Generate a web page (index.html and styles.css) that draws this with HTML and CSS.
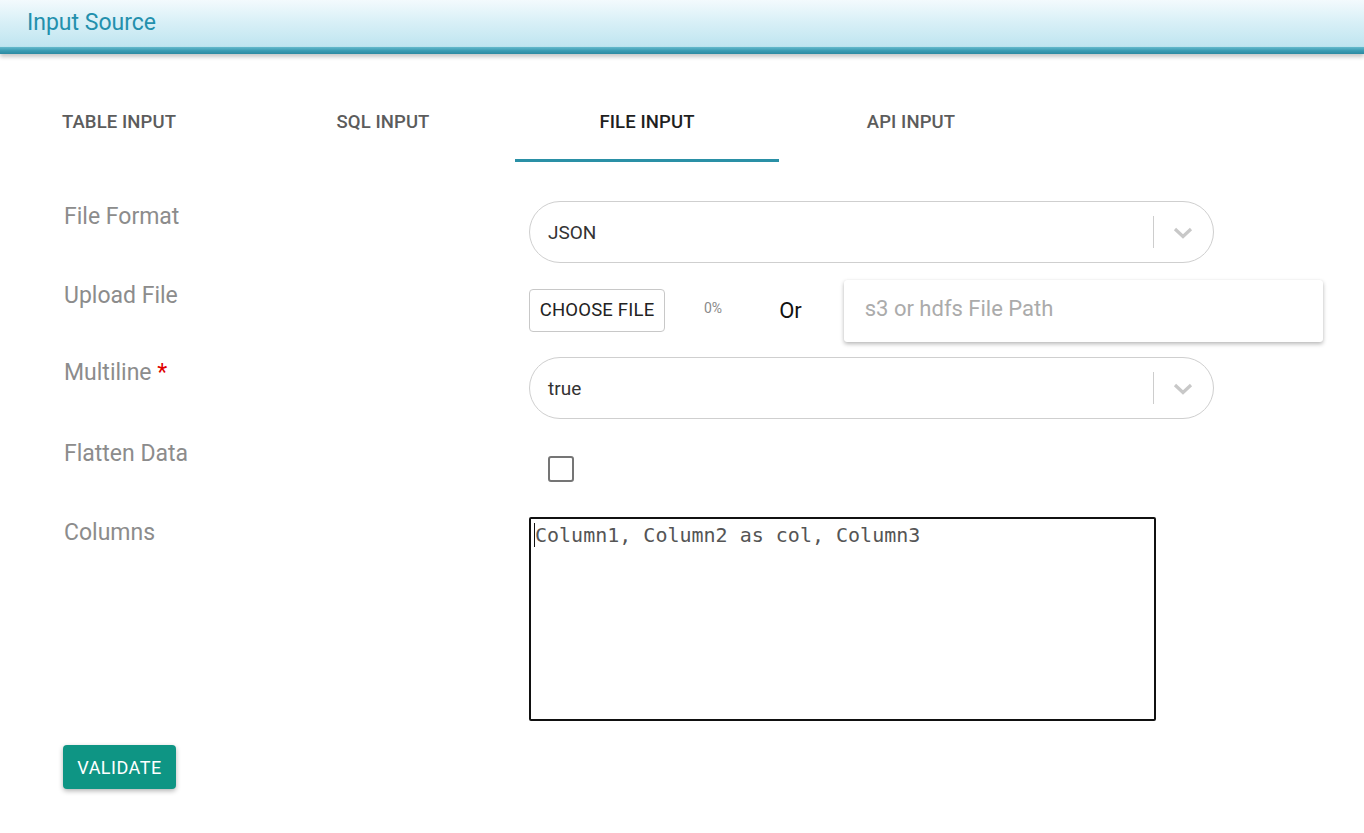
FILE: index.html
```html
<!DOCTYPE html>
<html>
<head>
<meta charset="utf-8">
<link rel="stylesheet" href="styles.css">
</head>
<body>
<header class="topbar">
  <div class="topbar-title">Input Source</div>
</header>
<main class="content">
  <nav class="tabs">
    <div class="tab">TABLE INPUT</div>
    <div class="tab">SQL INPUT</div>
    <div class="tab active">FILE INPUT</div>
    <div class="tab">API INPUT</div>
  </nav>
  <div class="form">
    <div class="row row-select">
      <div class="label">File Format</div>
      <div class="field">
        <div class="select">
          <span class="select-value">JSON</span>
          <span class="select-sep"></span>
          <svg class="chev" width="20" height="12" viewBox="0 0 20 12"><path d="M2 2 L10 9.5 L18 2" fill="none" stroke="#c8c8c8" stroke-width="3.2"/></svg>
        </div>
      </div>
    </div>
    <div class="row row-upload">
      <div class="label">Upload File</div>
      <div class="field upload">
        <button class="choose">CHOOSE FILE</button>
        <span class="pct">0%</span>
        <span class="or">Or</span>
        <div class="path">s3 or hdfs File Path</div>
      </div>
    </div>
    <div class="row row-select">
      <div class="label">Multiline <span class="req">*</span></div>
      <div class="field">
        <div class="select">
          <span class="select-value">true</span>
          <span class="select-sep"></span>
          <svg class="chev" width="20" height="12" viewBox="0 0 20 12"><path d="M2 2 L10 9.5 L18 2" fill="none" stroke="#c8c8c8" stroke-width="3.2"/></svg>
        </div>
      </div>
    </div>
    <div class="row row-check">
      <div class="label">Flatten Data</div>
      <div class="field"><span class="checkbox"></span></div>
    </div>
    <div class="row row-cols">
      <div class="label">Columns</div>
      <div class="field">
        <div class="textarea"><span class="caret"></span>Column1, Column2 as col, Column3</div>
      </div>
    </div>
  </div>
  <button class="validate">VALIDATE</button>
</main>
</body>
</html>
```
FILE: styles.css
```css
* { box-sizing: border-box; }
html, body { margin: 0; padding: 0; background: #fff; }
body { font-family: Roboto, "Noto Sans", Arial, sans-serif; width: 1364px; height: 833px; overflow: hidden; }

.topbar {
  height: 54px;
  background: linear-gradient(to bottom, #f3fafd 0%, #d9f0f7 40%, #bfe5f0 86%, #5fb5c8 88%, #3a9bb2 94%, #2c8aa2 100%);
  box-shadow: 0 3px 4px rgba(0,0,0,0.22);
  display: flex;
  align-items: flex-start;
  padding: 9px 0 0 27px;
}
.topbar-title { font-size: 23px; color: #2390ad; line-height: 28px; }

.content { padding: 0; }

.tabs { display: flex; margin: 46px 0 0 -13px; height: 62px; }
.tab {
  width: 264px; text-align: center;
  font-size: 18.5px; font-weight: 500; color: #5c5c5c;
  padding-top: 11px; letter-spacing: 0.1px;
  border-bottom: 3px solid transparent;
}
.tab.active { color: #1f1f1f; border-bottom-color: #2a90a6; }

.form { display: flex; flex-direction: column; margin-top: 39px; }
.row { display: flex; }
.label { width: 529px; padding-left: 64px; font-size: 23px; color: #8c8c8c; line-height: 28px; }
.req { color: #e00000; }
.field { flex: none; }

.row-select { height: 62px; }
.row-select .label { padding-top: 2px; }
.select {
  width: 685px; height: 62px; border: 1px solid #cfcfcf; border-radius: 31px;
  display: flex; align-items: center; padding-left: 18px;
}
.select-value { flex: 1; font-size: 19px; color: #333; }
.select-sep { width: 1px; height: 32px; background: #cdcdcd; }
.chev { margin: 2px 20px 0 19px; }

.row-upload { margin-top: 16px; height: 62px; }
.row-upload .label { padding-top: 3px; }
.upload { display: flex; align-items: center; width: 795px; }
.choose {
  height: 43px; width: 136px; margin-top: 0; background: #fff; border: 1px solid #c8c8c8; border-radius: 4px;
  font-family: Roboto, Arial, sans-serif; font-size: 18.5px; color: #222; padding: 0; letter-spacing: 0.2px;
}
.pct { font-size: 14px; color: #8a8a8a; margin-left: 39px; margin-top: -5px; }
.or { font-size: 22px; color: #111; margin-left: 57px; }
.path {
  margin-left: 42px; width: 479px; height: 62px; border-radius: 3px;
  box-shadow: 0 2px 4px rgba(0,0,0,0.28), 0 0 1px rgba(0,0,0,0.08);
  font-size: 22px; color: #ababab; padding: 16px 0 0 21px; margin-top: 1px;
}

.row-upload + .row-select { margin-top: 16px; }

.row-check { height: 62px; margin-top: 20px; }
.row-check .label { padding-top: 1px; }
.checkbox { display: block; width: 26px; height: 26px; border: 2px solid #757575; border-radius: 3px; margin: 17px 0 0 19px; }

.row-cols { margin-top: 16px; }
.row-cols .label { padding-top: 2px; }
.textarea {
  width: 627px; height: 204px; border: 2px solid #111; border-radius: 2px;
  font-family: "DejaVu Sans Mono", "Liberation Mono", monospace; font-size: 20px; color: #555;
  padding: 4px 0 0 3px; position: relative;
}
.caret { display: inline-block; width: 1px; height: 24px; background: #111; vertical-align: -5px; margin-right: 0; }

.validate {
  margin: 24px 0 0 63px; width: 113px; height: 44px; border: none; border-radius: 4px;
  background: #0e9584; color: #fff; font-family: Roboto, Arial, sans-serif; font-size: 18px; font-weight: 400;
  letter-spacing: 0.5px; box-shadow: 0 2px 5px rgba(0,0,0,0.3); display: block;
}
```
